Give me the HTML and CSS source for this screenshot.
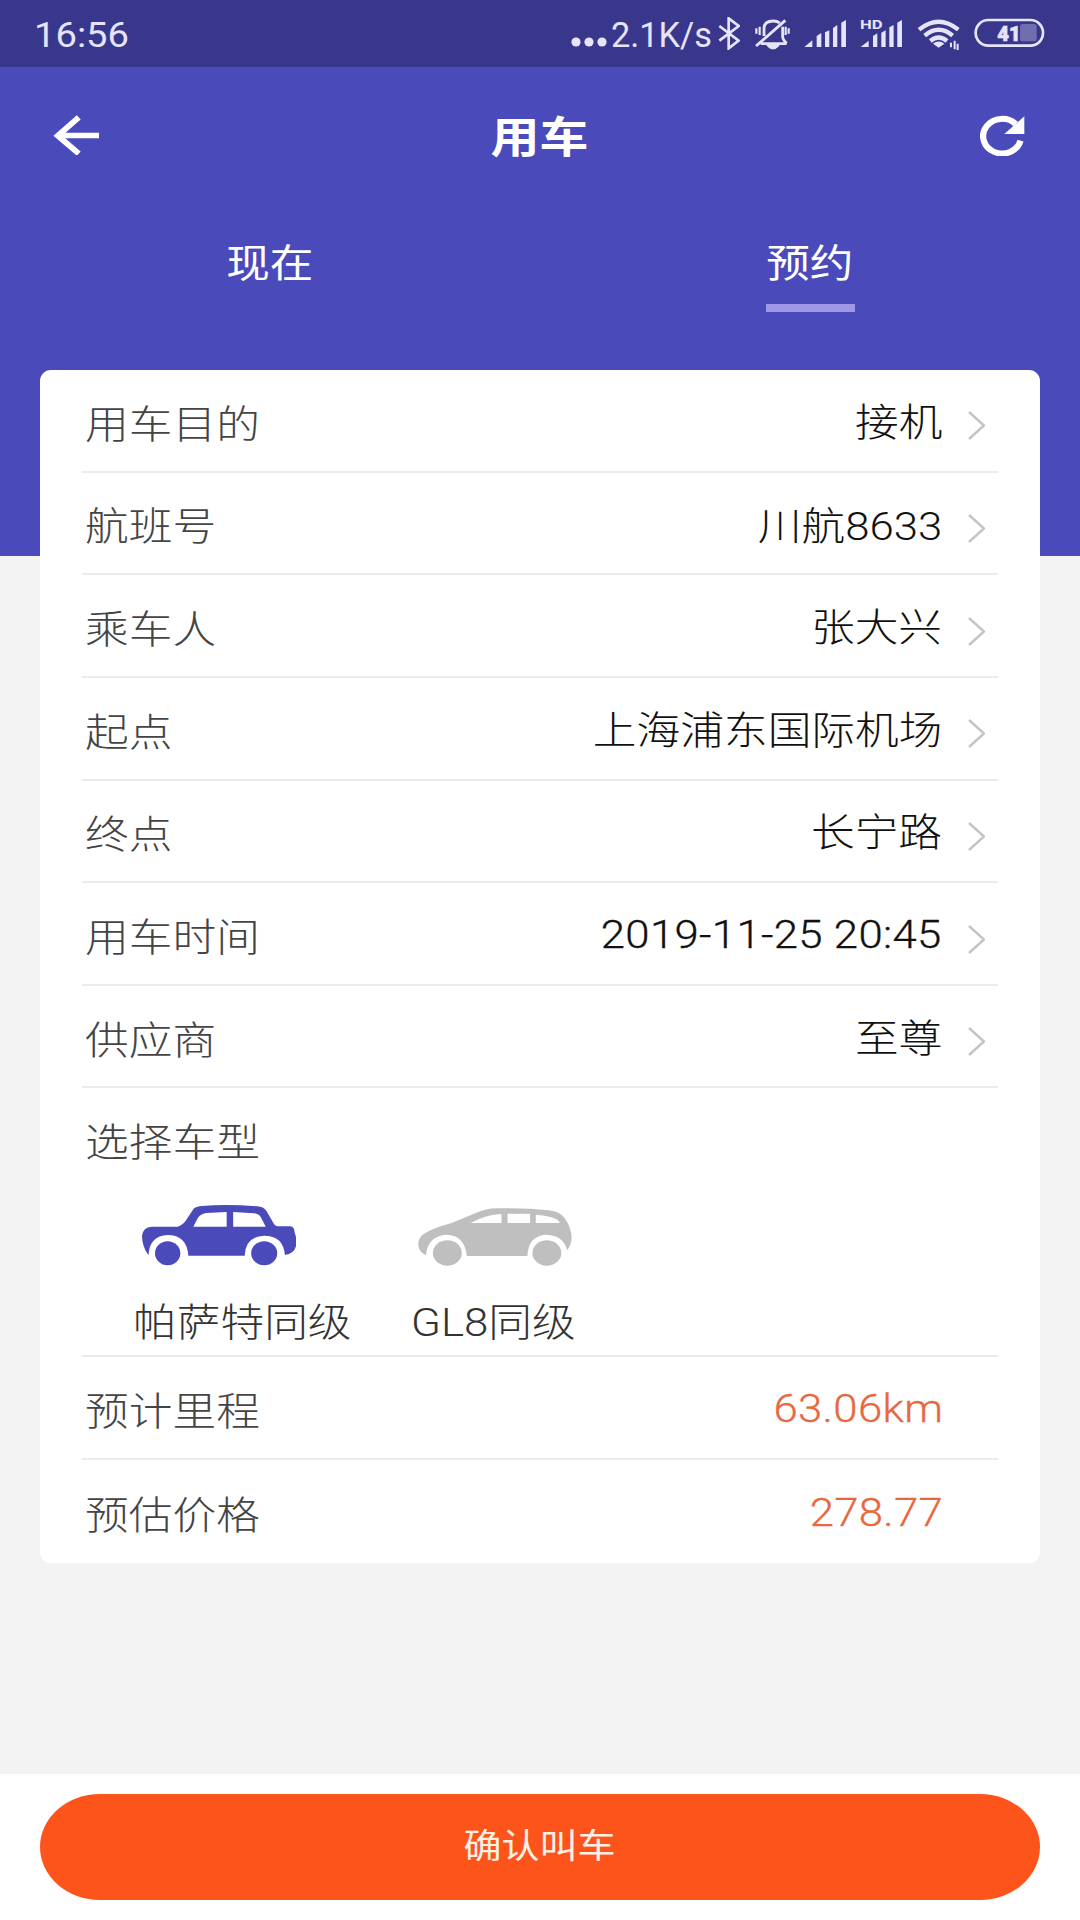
FILE: index.html
```html
<!DOCTYPE html>
<html lang="zh-CN">
<head>
<meta charset="utf-8">
<title>用车</title>
<link rel="stylesheet" href="styles.css">
</head>
<body>
<div class="screen">
  <div class="statusbar">
    <span class="clock">16:56</span>
    <div class="indicators">
      <svg class="dots" viewBox="0 0 36 10"><circle cx="5" cy="5" r="4.6"/><circle cx="18" cy="5" r="4.6"/><circle cx="31" cy="5" r="4.6"/></svg>
      <span class="speed">2.1K/s</span>
      <svg class="bluetooth" viewBox="476 50 68 98"><path d="M480 77l58 44-30 23V54l30 23-58 44" fill="none" stroke="currentColor" stroke-width="8"/></svg>
      <svg class="bell" viewBox="584 52 110 96"><g fill="none" stroke="currentColor" stroke-width="8.5"><path d="M604 129h78M614 106V84q0-23 28-23 12 0 19 6M670 78v31q0 7 12 19M590 136l88-77"/><path d="M591 83v16M601 78v25M679 78v25M688 83v16" stroke-width="6.5"/></g><path d="M620 132h42q-10 14-21 14t-21-14z"/></svg>
      <svg class="signal" viewBox="14 52 130 90"><path d="M15 139l24-20v20zM52 106l14-9v42H52zM77 95l13-6v50H77zM101 82l13-9v66h-13zM126 66l14-8v81h-14z"/></svg>
      <svg class="signal signal-hd" viewBox="182 52 130 90"><text x="182" y="86" textLength="68" lengthAdjust="spacingAndGlyphs">HD</text><path d="M184 139l24-19v19zM221 106l13-8v41h-13zM246 96l13-7v50h-13zM270 80l13-7v66h-13zM294 66l14-8v81h-14z"/></svg>
      <svg class="wifi" viewBox="354 52 132 100"><g fill="none" stroke="currentColor" stroke-width="13"><path d="M360 87q59-48 118 0M377 105q42-35 84 0M394 121q25-21 50 0"/></g><path d="M402 129q17-13 34 0l-17 12z"/><path d="M456 126v14M467 120v26M476 129v19" fill="none" stroke="currentColor" stroke-width="6"/></svg>
      <svg class="battery" viewBox="526 54 212 90"><rect x="664" y="72" width="50" height="52" rx="8" opacity=".32"/><rect x="531" y="60" width="202" height="77" rx="38" fill="none" stroke="currentColor" stroke-width="8"/><text x="596" y="122" textLength="70" lengthAdjust="spacingAndGlyphs">41</text></svg>
    </div>
  </div>

  <header class="header">
    <div class="titlebar">
      <svg class="back" viewBox="154 346 134 120" preserveAspectRatio="none"><path d="M229 353L168 408l61 54M168 407.5h120" fill="none" stroke="currentColor" stroke-width="17"/></svg>
      <h1 class="title">用车</h1>
      <svg class="refresh" viewBox="1274 342 136 126" preserveAspectRatio="none"><path d="M1383 372A55 52 0 1 0 1397 422" fill="none" stroke="currentColor" stroke-width="18"/><path d="M1408 349v53h-58z"/></svg>
    </div>
    <nav class="tabs">
      <a class="tab"><span class="wide">现在</span></a>
      <a class="tab active"><span class="wide">预约</span></a>
    </nav>
  </header>

  <main class="card">
    <div class="row"><span class="label">用车目的</span><span class="value">接机</span><svg class="chevron" viewBox="0 0 17 29"><path d="M1 1l15 13.5L1 28"/></svg></div>
    <div class="row"><span class="label">航班号</span><span class="value mixed">川航8633</span><svg class="chevron" viewBox="0 0 17 29"><path d="M1 1l15 13.5L1 28"/></svg></div>
    <div class="row"><span class="label">乘车人</span><span class="value">张大兴</span><svg class="chevron" viewBox="0 0 17 29"><path d="M1 1l15 13.5L1 28"/></svg></div>
    <div class="row"><span class="label">起点</span><span class="value">上海浦东国际机场</span><svg class="chevron" viewBox="0 0 17 29"><path d="M1 1l15 13.5L1 28"/></svg></div>
    <div class="row"><span class="label">终点</span><span class="value">长宁路</span><svg class="chevron" viewBox="0 0 17 29"><path d="M1 1l15 13.5L1 28"/></svg></div>
    <div class="row"><span class="label">用车时间</span><span class="value numeric">2019-11-25 20:45</span><svg class="chevron" viewBox="0 0 17 29"><path d="M1 1l15 13.5L1 28"/></svg></div>
    <div class="row"><span class="label">供应商</span><span class="value">至尊</span><svg class="chevron" viewBox="0 0 17 29"><path d="M1 1l15 13.5L1 28"/></svg></div>
    <section class="models">
      <span class="label">选择车型</span>
      <div class="options">
        <div class="option sedan selected">
          <svg class="car" viewBox="267 316 402 182" preserveAspectRatio="none">
            <path fill-rule="evenodd" d="M284 467Q267 440 267 408Q270 382 292 381H360Q373 377 382 362L400 330Q405 321 422 319Q490 313 568 320Q584 321 592 334L610 370Q614 380 625 380H654Q665 382 665 396L669 412V440Q664 462 640 466Q636 408 586 408Q537 410 535 468H388Q384 406 334 406Q286 408 284 467ZM401 381L413 354Q420 343 434 340L488 337V381ZM505 337L560 341Q572 343 577 352L590 381H505Z"/>
            <ellipse cx="334" cy="461" rx="33" ry="36"/><ellipse cx="586" cy="461" rx="34" ry="36"/>
          </svg>
          <span class="option-name">帕萨特同级</span>
        </div>
        <div class="option mpv">
          <svg class="car" viewBox="987 325 404 173" preserveAspectRatio="none">
            <path fill-rule="evenodd" d="M1008 467Q988 456 988 437Q986 415 1003 402Q1027 385 1075 370L1145 337Q1167 327 1195 326Q1270 324 1330 332Q1359 335 1373 357Q1390 386 1390 415Q1389 437 1378 452Q1369 407 1324 405Q1276 408 1274 469H1115Q1110 407 1062 405Q1012 408 1008 467ZM1125 370Q1165 345 1206 343V370ZM1222 342H1281V370H1222ZM1296 345Q1354 350 1359 370H1296Z"/>
            <ellipse cx="1064" cy="460" rx="38" ry="38"/><ellipse cx="1325" cy="460" rx="38" ry="38"/>
          </svg>
          <span class="option-name">GL8同级</span>
        </div>
      </div>
    </section>
    <div class="row"><span class="label">预计里程</span><span class="value numeric price">63.06km</span></div>
    <div class="row"><span class="label">预估价格</span><span class="value numeric price">278.77</span></div>
  </main>

  <footer class="footer">
    <button class="confirm" type="button"><span>确认叫车</span></button>
  </footer>
</div>
</body>
</html>
```

FILE: styles.css
```css
* { box-sizing: border-box; }
body {
  margin: 0;
  font-family: Roboto, "Noto Sans CJK SC", sans-serif;
  color: #111;
}
svg { display: block; flex: none; fill: currentColor; }

.screen {
  width: 1080px;
  height: 1920px;
  display: flex;
  flex-direction: column;
  background: #f3f3f3;
  overflow: hidden;
}

/* status bar */
.statusbar {
  height: 67px;
  flex: none;
  display: flex;
  justify-content: space-between;
  background: #38378b;
  color: #e6e4fb;
  padding: 0 35px 0 34px;
}
.clock, .speed {
  font-size: 35px;
  line-height: 71px;
  transform: scaleX(1.09);
  transform-origin: left center;
  white-space: nowrap;
}
.indicators { display: flex; align-items: flex-start; }
.dots { width: 36px; height: 10px; margin-top: 37px; }
.speed { width: 107px; margin-left: 4px; transform: scaleX(0.98); }
.bluetooth { width: 22.7px; height: 32.7px; margin-top: 17.3px; }
.bell { width: 36.7px; height: 32px; margin: 17.6px 0 0 13.3px; }
.signal { width: 43.3px; height: 30px; margin: 17.6px 0 0 13.4px; }
.signal-hd { margin-left: 12.7px; }
.signal text { font: 700 38px Roboto, sans-serif; }
.wifi { width: 44px; height: 33.3px; margin: 17.6px 0 0 14px; }
.battery { width: 70.7px; height: 30px; margin: 18px 0 0 13.3px; }
.battery text { font: 900 62px Roboto, sans-serif; stroke: currentColor; stroke-width: 2; }

/* header */
.header {
  height: 489px;
  flex: none;
  background: #4a4aba;
  color: #fff;
}
.titlebar {
  height: 140px;
  padding: 0 55px 0 53px;
  display: flex;
  align-items: center;
  justify-content: space-between;
}
.back { width: 46px; height: 40px; margin-bottom: 4px; }
.refresh { width: 47px; height: 42px; margin-bottom: 5px; }
.title {
  margin: 4px 0 0 2px;
  font-size: 43.5px;
  font-weight: 700;
  line-height: 60px;
  transform: scaleX(1.125);
}
.tabs { display: flex; padding-top: 27px; }
.tab {
  flex: 1;
  display: flex;
  flex-direction: column;
  align-items: center;
  font-size: 38.7px;
  line-height: 60px;
}
.wide { transform: scaleX(1.125); }
.tab.active::after {
  content: "";
  width: 89px;
  height: 8px;
  margin-top: 9.5px;
  background: #9d99e6;
}

/* booking details */
.card {
  width: 1000px;
  margin: -186px auto 0;
  padding: 0 42px;
  background: #fff;
  border-radius: 11px;
}
.row {
  height: 102.65px;
  display: flex;
  align-items: center;
  border-bottom: 2.5px solid #ebebeb;
}
.row:last-child { border-bottom: 0; }
.label, .value, .option-name {
  font-size: 38.7px;
  font-weight: 300;
  line-height: 56px;
  white-space: nowrap;
  transform: scaleX(1.13);
  transform-origin: left center;
}
.label { margin: 9px 0 0 3px; color: #444; }
.value {
  margin: 5px 26px 0 auto;
  transform-origin: right center;
}
.value.mixed { margin-top: 8px; }
.value.numeric { margin-top: 3px; letter-spacing: .27px; -webkit-text-stroke: .3px currentColor; }
.chevron {
  width: 17px;
  height: 29px;
  margin: 11px 13px 0 0;
  fill: none;
  stroke: #c4c4c4;
  stroke-width: 2.4;
}
.value.price { margin-right: 55px; color: #e8673f; }

.models {
  height: 269px;
  display: flex;
  flex-direction: column;
  align-items: flex-start;
  border-bottom: 2.5px solid #ebebeb;
}
.models > .label { margin-top: 27px; }
.options { display: flex; margin: 34px 0 0 51px; }
.option {
  height: 150px;
  display: flex;
  flex-direction: column;
  justify-content: flex-start;
}
.car { width: 154px; }
.sedan { width: 278px; }
.sedan .car { height: 60.7px; margin-left: 9px; color: #4a4aba; }
.mpv .car { height: 57.7px; margin: 3px 0 0 7px; color: #bfbfbf; }
.option-name { margin-top: 29px; color: #333; }

/* footer */
.footer {
  height: 146px;
  margin-top: auto;
  flex: none;
  padding: 20px 40px;
  background: #fff;
}
.confirm {
  width: 100%;
  height: 106px;
  border: 0;
  padding: 0;
  border-radius: 60px / 53px;
  background: #fd541c;
  color: #fff0e6;
  font: 400 33.8px/56px Roboto, "Noto Sans CJK SC", sans-serif;
}
.confirm span { display: inline-block; transform: scaleX(1.125); }
```
